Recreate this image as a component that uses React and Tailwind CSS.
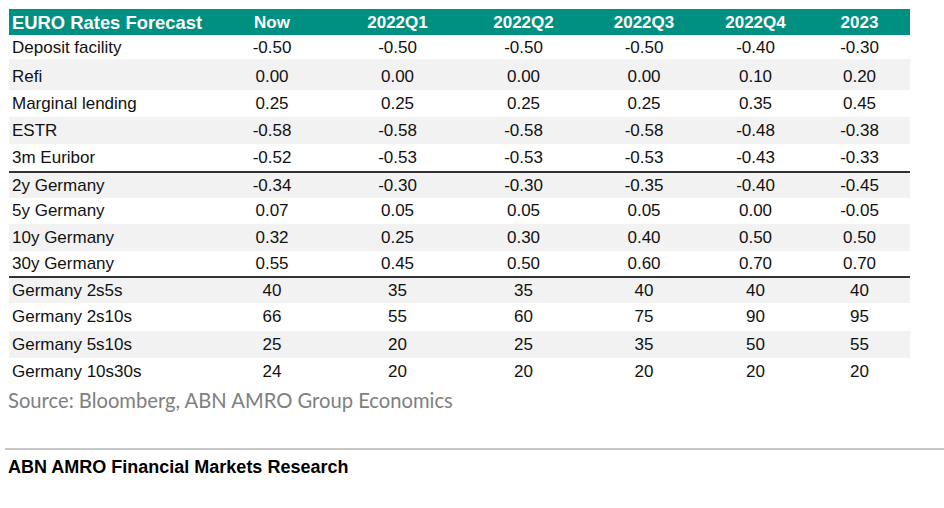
import React from 'react';

const cols = ['Now', '2022Q1', '2022Q2', '2022Q3', '2022Q4', '2023'];

// [label, values, row height, shaded, divider below]
const rows = [
  ['Deposit facility', ['-0.50', '-0.50', '-0.50', '-0.50', '-0.40', '-0.30'], 'h-[24px]', false],
  ['Refi', ['0.00', '0.00', '0.00', '0.00', '0.10', '0.20'], 'h-[31px] pt-[4px]', true],
  ['Marginal lending', ['0.25', '0.25', '0.25', '0.25', '0.35', '0.45'], 'h-[27px]', false],
  ['ESTR', ['-0.58', '-0.58', '-0.58', '-0.58', '-0.48', '-0.38'], 'h-[27px]', true],
  ['3m Euribor', ['-0.52', '-0.53', '-0.53', '-0.53', '-0.43', '-0.33'], 'h-[29px]', false, true],
  ['2y Germany', ['-0.34', '-0.30', '-0.30', '-0.35', '-0.40', '-0.45'], 'h-[25px]', true],
  ['5y Germany', ['0.07', '0.05', '0.05', '0.05', '0.00', '-0.05'], 'h-[26px]', false],
  ['10y Germany', ['0.32', '0.25', '0.30', '0.40', '0.50', '0.50'], 'h-[27px]', true],
  ['30y Germany', ['0.55', '0.45', '0.50', '0.60', '0.70', '0.70'], 'h-[27px]', false, true],
  ['Germany 2s5s', ['40', '35', '35', '40', '40', '40'], 'h-[25px]', true],
  ['Germany 2s10s', ['66', '55', '60', '75', '90', '95'], 'h-[28px]', false],
  ['Germany 5s10s', ['25', '20', '25', '35', '50', '55'], 'h-[27px]', true],
  ['Germany 10s30s', ['24', '20', '20', '20', '20', '20'], 'h-[27px]', false],
];

const grid = 'grid w-[901px] grid-cols-[201px_124px_127px_125px_116px_107px_101px]';

const App = () => {
  return (
    <div className="w-[944px] h-[508px] bg-white font-['Liberation_Sans',Arial,sans-serif] text-[#111]">
      <div className="pt-[9px] pl-[9px]">
        <div className={`${grid} h-[26px] items-center bg-[#009081] text-white font-bold text-[17px]`}>
          <div className="pl-[3px] text-[18.4px]">EURO Rates Forecast</div>
          {cols.map((c) => (
            <div key={c} className="text-center">
              {c}
            </div>
          ))}
        </div>
        {rows.map(([label, values, h, shaded, divider]) => (
          <div
            key={label}
            className={`${grid} ${h} items-center text-[17px] ${shaded ? 'bg-[#f2f2f2]' : 'bg-white'} ${
              divider ? 'border-b-2 border-[#333]' : ''
            }`}
          >
            <div className="pl-[3px]">{label}</div>
            {values.map((v, i) => (
              <div key={i} className="text-center">
                {v}
              </div>
            ))}
          </div>
        ))}
      </div>
      <div className="pl-[8px] text-[20.2px] text-[#808080] font-['Lato',sans-serif]">
        Source: Bloomberg, ABN AMRO Group Economics
      </div>
      <div className="mt-[33px] ml-[5px] border-t-2 border-[#c8c8c8]"></div>
      <div className="pl-[8px] pt-[4px] text-[18px] font-bold text-black">
        ABN AMRO Financial Markets Research
      </div>
    </div>
  );
};

export default App;
